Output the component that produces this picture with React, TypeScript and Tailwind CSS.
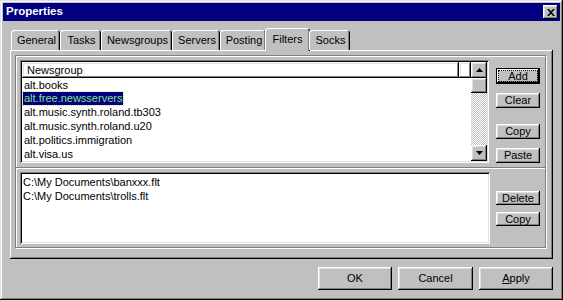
import React from 'react';

const raised =
  'shadow-[inset_-1px_-1px_#000,inset_1px_1px_#fff,inset_-2px_-2px_#808080,inset_2px_2px_#dfdfdf]';
const sunken =
  'shadow-[inset_1px_1px_#808080,inset_-1px_-1px_#fff,inset_2px_2px_#000,inset_-2px_-2px_#dfdfdf]';

const Btn = ({ label, className = '' }: { label: React.ReactNode; className?: string }) => (
  <div className={`flex items-center justify-center bg-[#c0c0c0] text-black ${raised} ${className}`}>{label}</div>
);

const Arrow = ({ up }: { up?: boolean }) => (
  <div className={`w-[16px] h-[16px] shrink-0 flex items-center justify-center bg-[#c0c0c0] ${raised}`}>
    <svg width="7" height="4" viewBox="0 0 7 4">
      <path d={up ? 'M3.5 0 L7 4 L0 4 Z' : 'M0 0 L7 0 L3.5 4 Z'} fill="#000" />
    </svg>
  </div>
);

const tabs = [
  { name: 'General', w: 'w-[49px]' },
  { name: 'Tasks', w: 'w-[41px]' },
  { name: 'Newsgroups', w: 'w-[71px]' },
  { name: 'Servers', w: 'w-[48px]' },
  { name: 'Posting', w: 'w-[46px]' },
  { name: 'Filters', w: 'w-[45px]', active: true },
  { name: 'Socks', w: 'w-[41px]' },
];

const groups = [
  'alt.books',
  'alt.free.newsservers',
  'alt.music.synth.roland.tb303',
  'alt.music.synth.roland.u20',
  'alt.politics.immigration',
  'alt.visa.us',
];

export default function App() {
  return (
    <div
      className={`w-[563px] h-[300px] bg-[#c0c0c0] p-[3px] flex flex-col text-[11px] text-black shadow-[inset_-1px_-1px_#000,inset_1px_1px_#dfdfdf,inset_-2px_-2px_#808080,inset_2px_2px_#fff] font-['Liberation_Sans',Arial,sans-serif]`}
    >
      {/* title bar */}
      <div className="h-[18px] bg-[#000080] flex items-center justify-between pl-[3px] pr-[2px]">
        <span className="text-white font-bold text-[11.5px] leading-none">Properties</span>
        <div className={`w-[15px] h-[14px] flex items-center justify-center bg-[#c0c0c0] ${raised}`}>
          <svg width="8" height="7" viewBox="0 0 8 7">
            <path d="M0 0 L2 0 L4 2.3 L6 0 L8 0 L5 3.5 L8 7 L6 7 L4 4.7 L2 7 L0 7 L3 3.5 Z" fill="#000" />
          </svg>
        </div>
      </div>

      {/* tabs */}
      <div className="mx-[7px] mt-[7px] flex flex-col">
        <div className="h-[22px] flex items-end pl-[1px] relative z-10">
          {tabs.map((t) =>
            t.active ? (
              <div
                key={t.name}
                className={`${t.w} h-[23px] -mb-[1px] -mx-[1px] bg-[#c0c0c0] rounded-t-[3px] flex items-center justify-center pb-[1px] shadow-[inset_1px_1px_#fff,inset_-1px_0_#000,inset_-2px_0_#808080]`}
              >
                {t.name}
              </div>
            ) : (
              <div
                key={t.name}
                className={`${t.w} h-[20px] bg-[#c0c0c0] rounded-t-[3px] flex items-center justify-center pt-[1px] pl-[2px] shadow-[inset_1px_1px_#fff,inset_-1px_0_#000,inset_-2px_0_#808080]`}
              >
                {t.name}
              </div>
            ),
          )}
        </div>

        {/* tab panel */}
        <div className="w-[543px] h-[209px] bg-[#c0c0c0] pl-[5px] pt-[5px] shadow-[inset_-1px_-1px_#000,inset_1px_1px_#fff,inset_-2px_-2px_#808080]">
          <div className="w-[531px] h-[193px] border border-[#808080] shadow-[inset_1px_1px_#fff,1px_1px_#fff] flex flex-col">
            {/* top section */}
            <div className="h-[111px] flex pl-[4px] pt-[4px]">
              <div className={`w-[469px] h-[103px] bg-white p-[2px] flex ${sunken}`}>
                <div className="flex-1 flex flex-col">
                  <div className="h-[16px] flex">
                    <div className={`w-[437px] h-[16px] flex items-center pl-[5px] ${raised}`}>Newsgroup</div>
                    <div className={`flex-1 h-[16px] ${raised}`} />
                  </div>
                  {groups.map((g) => (
                    <div key={g} className="h-[14px] flex items-center">
                      {g === 'alt.free.newsservers' ? (
                        <span className="bg-[#000080] text-[#86e086] outline outline-1 outline-dotted outline-[#d8d870] px-[1px] ml-[1px] leading-[13px]">
                          {g}
                        </span>
                      ) : (
                        <span className="pl-[2px]">{g}</span>
                      )}
                    </div>
                  ))}
                </div>
                <div className="w-[16px] flex flex-col">
                  <Arrow up />
                  <div className={`w-[16px] h-[15px] bg-[#c0c0c0] ${raised}`} />
                  <div className="flex-1 bg-[repeating-conic-gradient(#c0c0c0_0_25%,#fff_0_50%)] bg-[length:2px_2px]" />
                  <Arrow />
                </div>
              </div>
              <div className="ml-[7px] w-[44px] flex flex-col">
                <div className="mt-[8px] w-[44px] h-[16px] border border-black">
                  <Btn
                    className="w-full h-full"
                    label={<span className="outline outline-1 outline-dotted outline-black px-[9px] leading-[10px]">Add</span>}
                  />
                </div>
                <Btn label="Clear" className="mt-[9px] h-[15px]" />
                <Btn label="Copy" className="mt-[16px] h-[15px]" />
                <Btn label="Paste" className="mt-[9px] h-[15px]" />
              </div>
            </div>

            {/* divider */}
            <div className="h-[2px] border-t border-[#808080] border-b border-b-white" />

            {/* bottom section */}
            <div className="flex-1 flex pl-[4px] pt-[3px]">
              <div className={`w-[470px] h-[72px] bg-white p-[2px] flex flex-col pt-[3px] ${sunken}`}>
                <div className="h-[14px] pl-[1px] flex items-center">C:\My Documents\banxxx.flt</div>
                <div className="h-[14px] pl-[1px] flex items-center">C:\My Documents\trolls.flt</div>
              </div>
              <div className="ml-[6px] w-[44px] flex flex-col">
                <Btn label="Delete" className="mt-[19px] h-[14px]" />
                <Btn label="Copy" className="mt-[7px] h-[14px]" />
              </div>
            </div>
          </div>
        </div>

        {/* dialog buttons */}
        <div className="mt-[8px] flex justify-end gap-[6px]">
          <Btn label="OK" className="w-[74px] h-[23px]" />
          <Btn label="Cancel" className="w-[75px] h-[23px]" />
          <Btn
            label={
              <span>
                <span className="underline">A</span>pply
              </span>
            }
            className="w-[74px] h-[23px]"
          />
        </div>
      </div>
    </div>
  );
}
